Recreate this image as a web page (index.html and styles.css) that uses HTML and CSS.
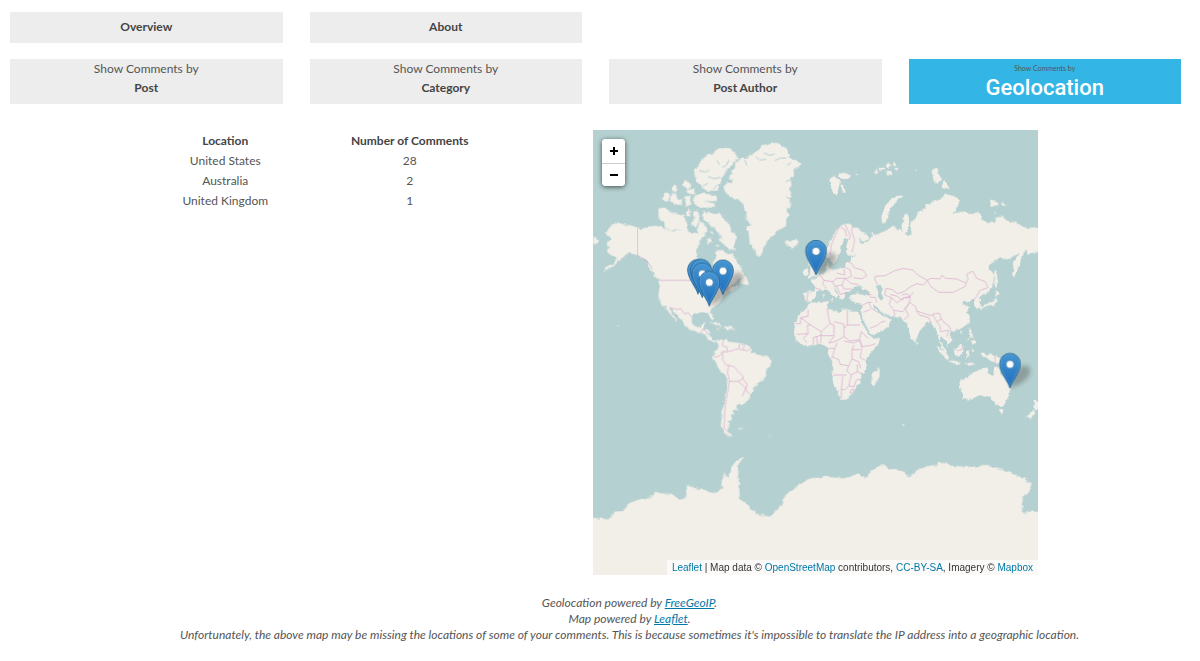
FILE: index.html
```html
<!DOCTYPE html>
<html lang="en">
<head>
<meta charset="utf-8">
<title>Comments by Geolocation</title>
<link rel="stylesheet" href="styles.css">
</head>
<body>
<nav class="tabs">
  <div class="tab-row">
    <a class="tab" href="#overview"><strong class="tab-name">Overview</strong></a>
    <a class="tab" href="#about"><strong class="tab-name">About</strong></a>
  </div>
  <div class="tab-row">
    <a class="tab tab-tall" href="#post"><span class="tab-hint">Show Comments by</span><strong class="tab-name">Post</strong></a>
    <a class="tab tab-tall" href="#category"><span class="tab-hint">Show Comments by</span><strong class="tab-name">Category</strong></a>
    <a class="tab tab-tall" href="#author"><span class="tab-hint">Show Comments by</span><strong class="tab-name">Post Author</strong></a>
    <a class="tab tab-tall tab-active" href="#geolocation"><span class="tab-hint">Show Comments by</span><strong class="tab-name">Geolocation</strong></a>
  </div>
</nav>
<main class="results">
  <table class="counts">
    <thead><tr><th scope="col">Location</th><th scope="col">Number of Comments</th></tr></thead>
    <tbody>
      <tr><td>United States</td><td>28</td></tr>
      <tr><td>Australia</td><td>2</td></tr>
      <tr><td>United Kingdom</td><td>1</td></tr>
    </tbody>
  </table>
  <section class="map" aria-label="Map of comments">
    <svg class="world" viewBox="0 0 1335 1335" role="img" aria-label="World map">
      <defs>
        <filter id="coast" x="0" y="0" width="1335" height="1335" filterUnits="userSpaceOnUse">
          <feTurbulence type="fractalNoise" baseFrequency=".06" numOctaves="3" seed="4"/>
          <feDisplacementMap in="SourceGraphic" scale="12" xChannelSelector="R" yChannelSelector="G"/>
        </filter>
        <filter id="soft" x="-50%" y="-50%" width="200%" height="200%"><feGaussianBlur stdDeviation="6"/></filter>
        <linearGradient id="blue" x1="0" y1="0" x2="0" y2="1"><stop offset="0" stop-color="#4796d3"/><stop offset="1" stop-color="#1d6dbb"/></linearGradient>
        <g id="shade"><path d="M0 0 L10-40 Q30-72 54-66 Q70-52 50-28 Q32-10 0 0Z" fill="#444" opacity=".36" filter="url(#soft)"/></g>
        <g id="pin">
          <path d="M0 0 C-4-17-31-47-31-73 A31 31 0 0 1 31-73 C31-47 4-17 0 0Z" fill="url(#blue)" stroke="#2e6c97" stroke-width="3"/>
          <path d="M0-9 C-6-26-28-51-28-73 A28 28 0 0 1 28-73 C28-51 6-26 0-9Z" fill="none" stroke="#69aee0" stroke-width="2" opacity=".6"/>
          <circle cy="-71" r="12" fill="#fff" stroke="#2e6c97" stroke-width="2"/>
        </g>
      </defs>
      <g class="land" filter="url(#coast)">
        <g transform="translate(-9 255)">
          <path d="M48 50L60 36 75 25 85 22 100 28 120 30 142 38 150 42 165 38 175 35 190 32 205 34 220 40 235 45 250 50 262 42 270 46 285 44 300 52 318 54 330 56 340 48 345 54 342 66 330 75 325 90 322 105 318 125 335 140 355 150 362 165 372 155 368 142 378 130 375 112 385 105 395 106 405 112 415 118 430 115 435 125 445 150 460 165 466 176 455 186 440 195 425 208 418 215 430 215 444 210 425 228 410 232 400 240 390 255 388 265 375 275 365 280 360 290 368 300 372 310 367 313 358 302 352 292 335 292 325 294 315 295 308 303 305 315 308 330 318 338 330 335 335 325 345 324 342 335 338 343 350 345 360 348 358 360 365 372 375 378 385 372 388 378 384 384 368 382 358 375 348 362 335 352 320 350 305 345 290 335 280 325 272 312 262 300 250 290 243 279 238 283 250 300 262 315 258 318 245 303 235 290 228 278 215 268 208 255 205 240 207 225 210 210 206 200 212 195 200 190 190 175 180 165 178 150 168 138 155 128 145 120 130 117 115 115 108 118 100 128 85 141 70 152 55 162 38 170 50 158 70 145 82 134 80 125 65 122 55 115 50 105 60 98 50 90 52 80 65 75 62 65 50 62Z"/>
          <path d="M10 65L20 68 27 78 20 86 10 88ZM452 190L466 180 477 205 470 210 450 205ZM356 322L372 320 390 328 400 335 385 332ZM402 334L425 336 430 343 405 343ZM80 331L88 334 86 338ZM380 340L390 342 386 345ZM432 340L436 342 433 346Z"/>
        </g>
        <g transform="translate(-9 -15)">
          <path d="M400 185L410 175 430 170 425 165 415 160 418 150 430 145 425 138 435 128 435 115 445 105 455 98 475 98 490 85 505 75 520 60 545 53 570 55 575 65 590 72 600 90 595 100 610 105 632 115 625 128 610 135 612 150 600 160 605 180 600 195 605 210 598 225 605 245 590 255 600 270 585 285 590 298 575 308 560 318 550 330 535 345 525 360 520 375 512 392 500 390 492 375 480 360 478 340 475 320 468 308 485 300 470 285 470 265 462 245 455 232 440 222 420 215 405 200Z"/>
          <path d="M395 70L415 72 435 82 445 95 435 110 425 120 410 130 405 145 395 160 388 180 385 195 360 200 345 195 335 185 320 170 315 155 312 135 325 125 330 110 345 95 365 85 380 75Z"/>
          <path d="M340 262L355 260 370 270 385 262 400 275 410 290 420 305 425 320 440 335 435 350 430 365 435 378 420 375 405 362 395 352 385 345 395 335 385 322 375 310 365 305 350 290 340 285Z"/>
          <path d="M205 250L225 248 240 262 262 265 280 270 290 290 295 315 280 320 262 310 245 318 225 310 223 292 206 282ZM212 222L228 202 240 212 232 228ZM244 190L255 178 264 188 256 204ZM278 180L288 165 303 178 295 195ZM286 198L312 190 318 206 300 208ZM242 212L258 204 262 226 276 222 275 240 250 236 240 226ZM282 215L300 212 305 240 290 244ZM312 212L340 205 380 212 378 228 340 230 375 235 372 247 330 248 312 232ZM285 262L297 252 302 272 292 278ZM308 255L325 258 328 285 318 308 306 300 312 280ZM330 290L345 300 352 320 330 328 320 315ZM348 340L360 335 368 352 355 358ZM360 318L370 322 365 330ZM375 362L385 358 388 366Z"/>
          <path d="M583 350L592 345 600 350 615 342 627 350 618 362 605 368 592 362Z"/>
        </g>
        <g transform="translate(291 570)">
          <path d="M85 62L92 55 100 60 110 56 118 65 135 68 150 70 165 72 180 80 185 92 180 100 195 98 215 105 235 112 245 122 240 138 228 150 228 165 220 182 205 188 195 198 190 215 178 232 165 248 158 255 145 252 138 258 142 268 130 272 132 280 122 285 126 298 115 305 120 315 112 322 115 335 128 348 118 350 105 342 98 330 92 315 95 300 98 285 92 275 100 262 102 245 108 225 110 200 112 180 110 168 95 158 85 145 78 128 68 112 75 105 72 95 82 88 88 78Z"/>
          <path d="M144 324L158 325 152 332ZM235 344L243 346 238 348ZM566 145L569 160 560 185 552 195 543 190 545 172 552 155Z"/>
        </g>
        <g transform="translate(561 255)">
          <path d="M85 268L95 262 110 262 125 264 142 258 145 265 142 278 155 285 168 288 178 295 185 280 200 282 220 290 235 290 237 300 245 318 252 335 262 350 268 362 280 372 300 368 298 382 285 400 270 415 260 430 257 440 260 457 255 473 242 480 240 493 242 503 230 513 228 523 215 537 200 550 180 552 177 543 170 520 158 495 155 480 160 465 158 445 150 430 143 415 146 400 135 393 125 387 113 387 100 393 80 393 65 390 52 377 44 365 42 350 45 335 42 325 52 310 62 295 75 285Z"/>
          <path d="M190 28L205 25 215 30 240 45 262 60 268 70 255 78 235 72 245 85 260 80 275 65 275 52 285 60 300 55 315 48 330 40 340 35 355 45 365 50 365 30 370 10 375-5 385 0 388 20 383 40 375 55 385 65 395 50 390 30 400 15 415 5 415-10 435-20 440-30 460-40 485-48 495-65 505-60 530-55 538-40 530-15 515-5 535-8 555-12 570-2 590-8 602 0 605 15 620 25 635 20 650 20 645 8 665 5 680 15 695 20 715 25 735 40 755 35 780 42 780 110 760 112 745 118 738 106 726 120 722 140 712 165 702 188 696 180 700 160 702 145 710 130 718 117 700 122 690 132 672 132 655 130 640 140 625 155 632 170 643 178 640 190 640 205 630 225 618 235 605 240 597 248 602 262 602 275 590 282 582 270 582 255 570 258 560 262 552 255 545 262 558 272 570 275 560 290 570 305 568 320 555 335 535 345 520 350 510 348 507 358 518 372 512 385 500 392 500 380 490 370 482 362 480 375 488 392 498 405 502 415 495 410 485 397 477 375 472 355 465 345 455 325 440 322 430 335 418 350 410 370 405 382 395 370 385 345 380 325 370 318 362 308 345 305 325 300 310 295 295 285 285 270 278 262 282 275 292 290 305 300 318 303 332 315 325 335 310 345 290 355 275 360 268 350 255 325 245 300 243 285 245 272 243 265 225 262 215 258 206 248 212 240 230 235 255 240 268 235 262 225 248 222 240 212 225 215 215 222 203 232 195 238 195 248 190 255 180 245 172 230 160 218 165 228 175 240 168 252 160 245 150 232 140 222 125 225 110 230 108 245 95 260 80 262 75 258 72 235 85 228 103 230 105 215 92 198 110 190 120 180 135 172 140 165 135 155 143 145 147 160 160 164 175 162 195 158 198 140 210 140 215 127 228 120 205 122 198 110 200 90 205 72 198 68 185 85 180 100 178 118 170 135 160 148 152 130 140 128 135 110 150 80 165 50 178 35Z"/>
          <path d="M68 170L82 158 86 176 72 182ZM85 188L108 186 118 178 108 160 98 140 86 138 92 160 90 175ZM643 162L651 178 654 200 648 222 643 205ZM650 226L660 236 645 246ZM648 248L652 262 640 271 622 276 608 276 604 286 598 278 618 268 635 264ZM148 255L160 252 158 260ZM124 238L131 238 130 250ZM408 376L417 384 411 390ZM566 342L574 344 574 362 583 368 572 368ZM572 380L584 374 586 386 578 392ZM540 350L548 351 543 357ZM565 314L570 322 565 328ZM558 380L566 366 568 370Z"/>
        </g>
        <g transform="translate(651 -15)">
          <path d="M58 160L75 153 90 165 88 180 80 214 70 205 62 185ZM85 148L105 140 120 152 108 165 95 160ZM90 176L100 182 108 200 98 200ZM135 147L144 146 143 151ZM192 138L202 132 206 142 196 148ZM208 130L220 125 224 134 212 138ZM228 122L236 110 244 120 236 132ZM246 118L255 112 255 125ZM225 138L240 138 248 150 230 148ZM250 132L266 126 262 137ZM364 138L380 123 388 150 397 165 380 175 368 152ZM400 168L406 165 416 188 394 192ZM272 208L281 213 262 225 245 245 232 270 232 290 217 295 214 275 225 245 245 222ZM540 225L557 226 567 240 543 246ZM572 233L580 234 588 243 577 241ZM551 260L560 262 556 267ZM312 133L322 134 318 138Z"/>
        </g>
        <g transform="translate(861 540)">
          <path d="M168 106L180 112 195 126 210 146 204 150 188 135 178 120ZM206 152L225 152 244 158 240 163 215 158ZM222 120L240 103 253 110 248 130 240 140 224 134ZM258 122L276 118 264 126 270 142 264 140 259 148ZM250 160L272 158 288 158 270 164ZM278 116L286 122 281 130ZM302 128L312 128 320 137 332 133 352 140 372 152 380 166 365 164 345 158 330 152 322 144 308 140Z"/>
          <path d="M238 215L245 210 262 202 275 190 290 183 300 182 305 175 322 172 325 180 322 190 335 198 342 195 346 168 355 170 362 190 375 205 388 225 390 240 385 260 375 280 362 288 345 280 338 270 330 262 320 258 300 255 285 262 265 268 248 268 245 250 240 230ZM357 298L371 298 367 311 360 311ZM464 268L475 278 475 296 464 302ZM460 300L467 308 450 328 439 322ZM66 340L76 344 69 346Z"/>
        </g>
        <path d="M-10 1162L46 1168 66 1145 91 1142 111 1118 141 1108 181 1098 186 1085 211 1092 241 1095 259 1110 279 1105 279 1068 296 1068 311 1078 336 1080 356 1090 376 1080 389 1075 384 1065 390 1050 396 1030 406 1045 411 1020 423 1000 446 980 454 982 436 1002 436 1040 441 1105 461 1122 491 1152 531 1160 566 1125 581 1095 616 1065 651 1046 691 1040 721 1042 756 1045 796 1030 816 1042 841 1018 871 1002 891 1018 926 1022 951 1040 976 1018 1001 1008 1031 1005 1036 998 1061 1000 1091 1010 1121 1008 1151 1010 1181 1005 1211 1012 1251 1028 1291 1045 1316 1062 1306 1085 1289 1105 1287 1145 1296 1152 1306 1145 1345 1145 1345 1345-10 1345Z"/>
      </g>
      <g class="lakes">
        <path d="M848 468L862 464 870 478 864 488 872 505 864 512 855 500 856 485Z"/>
        <path class="fjords" d="M318 122L338 126 350 120M345 140L365 146 382 142M408 90L400 106 388 112M372 92L380 104M455 90L462 106M488 80L500 90 520 88M512 68L530 76 545 72M545 92L562 84 580 84M595 98L582 106M592 150L578 154M595 206L580 202M594 240L580 236M330 168L344 160M360 178L374 164"/>
      </g>
      <g class="borders">
        <path d="M133 293V377L150 385 162 395 172 405 178 418M201 451H330M228 532L250 538 264 536 275 552 286 548 298 564M322 608L330 598 338 602 345 615"/>
        <g transform="translate(291 570)"><path d="M100 60L96 76 112 82 110 96 126 92 138 88 148 86 148 70M163 72L160 88M148 88L172 92 180 86M72 112L88 108 98 94 110 96M98 94L98 120 108 134 116 136 132 140 144 154 158 168 160 178 172 194 166 208 156 230M116 136L112 156 118 184 130 184 144 184 158 176M144 184L166 202 170 214 180 222M118 184L114 210 108 240 104 275 104 300 102 325 120 340"/></g>
        <g transform="translate(561 255)">
          <path d="M45 326H62V308L84 304V284M62 308L92 330 124 350 130 344 150 326 144 300 142 280M92 330H82L84 356 50 358M84 356L70 370 80 384M100 368L100 388M110 364L112 386M124 350L122 384M100 368L124 360M150 326L162 330 162 364 146 384M162 320L192 328 192 340M202 284V330H240M202 330L192 340 192 365 210 378 238 374 244 350 264 370M124 362H160M146 384L165 380 192 365M192 378L220 384 240 376 246 394 270 392 286 386M240 376L246 400 240 428 256 436M146 400L164 400 172 384M164 400L158 426 176 434 180 448 206 452 216 432 216 404 222 390M158 426L150 430M206 452L200 468 214 480 232 470 246 476M214 480L206 512 196 524 184 524 184 550M158 480H200M184 524L188 484M206 512L222 516 228 496 242 492M212 526L222 522 218 534 210 534ZM216 404H240M216 432L236 440 242 460M232 448V470"/>
          <path d="M178 35L168 55 154 90 150 120M195 28L205 50 210 62 208 75M180 35L195 45 200 65M218 30L215 50 224 75 216 112M198 140L214 144 222 158 250 166 260 182 245 192 220 188M196 158L210 164 214 184 200 190 170 190M192 162L194 180 170 174M120 180L132 196 128 208 140 220M132 196L158 200 170 190M158 200L164 214 186 210 192 222 216 222M170 214L180 238 204 232M186 210L194 190 214 206 236 208M84 232L80 258M105 218L126 226M276 240L262 236 274 248 286 246M266 262L274 280 294 292M245 272L264 262 275 262M250 292L270 284M270 340L294 330 302 322 316 318M285 246L290 262M292 210L284 192 286 184 316 182 342 168 370 160 400 166 414 180 442 196 430 210 410 206 390 216 372 230 352 236 338 224 318 220 314 240 334 248 352 264 366 250 390 244 400 232M330 238L352 244 366 256 374 246M366 240L380 236 392 246 378 250M334 248L328 268 342 286 344 304M342 286L368 290 388 264 390 248M390 262L408 276 410 288 452 302 458 298 478 294 484 312 492 322 506 332 514 346M388 264L376 282 386 302 372 314M410 288L418 300 446 308 452 324M458 298L470 320 484 312M470 320L480 332 482 350 506 346 500 366M442 196L452 190 480 192 486 180 496 190 530 192 558 204 556 214 520 232 476 232 452 214ZM558 204L564 192 560 178 578 168 590 190 616 200 624 218 600 226 590 244 580 256"/>
        </g>
        <path d="M1092 662L1104 660 1110 646M1206 676V700"/>
      </g>
      <g>
        <use href="#shade" x="390" y="494"/><use href="#shade" x="349" y="528"/><use href="#shade" x="669" y="435"/><use href="#shade" x="1251" y="774"/>
        <use href="#pin" x="315" y="492"/><use href="#pin" x="324" y="492"/><use href="#pin" x="390" y="494"/><use href="#pin" x="328" y="503"/><use href="#pin" x="349" y="528"/><use href="#pin" x="669" y="435"/><use href="#pin" x="1251" y="774"/>
      </g>
    </svg>
    <div class="zoom">
      <button type="button" aria-label="Zoom in"><svg viewBox="0 0 10 10"><path d="M5 1V9M1 5H9"/></svg></button>
      <button type="button" aria-label="Zoom out"><svg viewBox="0 0 10 10"><path d="M1 5H9"/></svg></button>
    </div>
    <div class="credit"><a href="#leaflet">Leaflet</a> | Map data © <a href="#osm">OpenStreetMap</a> contributors, <a href="#license">CC-BY-SA</a>, Imagery © <a href="#mapbox">Mapbox</a></div>
  </section>
</main>
<footer class="notes">
  <p>Geolocation powered by <a href="#freegeoip">FreeGeoIP</a>.</p>
  <p>Map powered by <a href="#leaflet">Leaflet</a>.</p>
  <p>Unfortunately, the above map may be missing the locations of some of your comments. This is because sometimes it's impossible to translate the IP address into a geographic location.</p>
</footer>
</body>
</html>
```
FILE: styles.css
```css
* { box-sizing: border-box; }
body { margin: 0; padding: 12px 19px 16px 10px; background: #fff; color: #555; font: 12px/20px Lato, "Noto Sans", sans-serif; }
a { color: #0078a8; }
.tabs { display: grid; gap: 16px; }
.tab-row { display: grid; grid-template-columns: repeat(4, 1fr); column-gap: 27px; }
.tab { display: flex; flex-direction: column; align-items: center; padding: 5px 0 6px; background: #ededed; color: #555; text-decoration: none; }
.tab-tall { padding: 0 0 7px; }
.tab-hint { line-height: 19px; }
.tab-name { color: #444; font-weight: 700; line-height: 19px; }
.tab-row:first-child .tab-name { line-height: 20px; }
.tab-active { background: #33b5e5; }
.tab-active .tab-hint { font-size: 7px; }
.tab-active .tab-name { color: #fff; font-family: Roboto, sans-serif; font-size: 22px; font-weight: 500; }
.results { display: flex; align-items: flex-start; gap: 91px; padding: 26px 0 0 123px; }
.counts { width: 369px; margin-top: 1px; table-layout: fixed; border-collapse: collapse; text-align: center; }
.counts th, .counts td { padding: 0; height: 20px; }
.counts th { color: #444; font-weight: 700; }
.map { position: relative; flex: 0 1 445px; overflow: hidden; background: #b5d0d0; }
.world { display: block; width: 100%; height: auto; }
.land { fill: #f2efe9; }
.lakes { fill: #b5d0d0; }
.fjords { fill: none; stroke: #b5d0d0; stroke-width: 3; }
.borders { fill: none; stroke: #d8a6cc; stroke-width: 2; stroke-linejoin: round; }
.zoom { position: absolute; top: 9px; left: 9px; width: 23px; border-radius: 4px; background: #fff; box-shadow: 0 1px 5px rgba(0, 0, 0, .65); overflow: hidden; }
.zoom button { display: grid; place-items: center; width: 100%; height: 24px; padding: 0; border: 0; background: #fff; }
.zoom button + button { height: 23px; border-top: 1px solid #ccc; }
.zoom svg { width: 10px; height: 10px; stroke: #000; stroke-width: 2; }
.credit { position: absolute; right: 0; bottom: 0; padding: 0 5px; background: rgba(255, 255, 255, .7); color: #333; font: 10px/15px "Liberation Sans", Arial, sans-serif; white-space: nowrap; }
.credit a { text-decoration: none; }
.notes { padding: 20px 0 0 68px; text-align: center; font-style: italic; line-height: 16px; }
.notes p { margin: 0; }
```
